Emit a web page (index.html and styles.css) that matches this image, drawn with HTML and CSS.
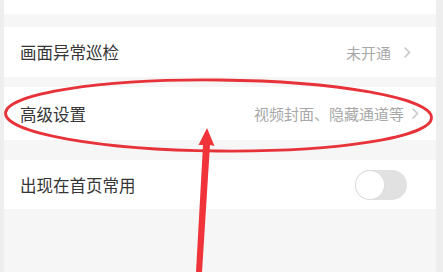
FILE: index.html
```html
<!DOCTYPE html>
<html lang="zh">
<head>
<meta charset="utf-8">
<link rel="stylesheet" href="styles.css">
</head>
<body>
<div class="page">
  <div class="card card-top"></div>
  <div class="card row row-1">
    <span class="title">画面异常巡检</span>
    <span class="value">未开通<span class="chev"><svg width="8" height="13" viewBox="0 0 8 13"><path d="M1.5 1.5 L6.5 6.5 L1.5 11.5" fill="none" stroke="#c8c8c8" stroke-width="1.6"/></svg></span></span>
  </div>
  <div class="card row row-2">
    <span class="title">高级设置</span>
    <span class="value">视频封面、隐藏通道等<span class="chev"><svg width="8" height="13" viewBox="0 0 8 13"><path d="M1.5 1.5 L6.5 6.5 L1.5 11.5" fill="none" stroke="#c8c8c8" stroke-width="1.6"/></svg></span></span>
  </div>
  <div class="card row row-3">
    <span class="title">出现在首页常用</span>
    <span class="toggle"><span class="knob"></span></span>
  </div>
  <svg class="mark" width="443" height="272" viewBox="0 0 443 272">
    <ellipse cx="218.5" cy="115.5" rx="213" ry="35.5" fill="none" stroke="#e8323a" stroke-width="2.8" transform="rotate(0.6 218.5 115.5)"/>
    <polygon points="196,272 202,272 210,145 214.5,146 207,128 198.5,145 203,145" fill="#f1343a"/>
  </svg>
</div>
</body>
</html>
```

FILE: styles.css
```css
html, body {
  margin: 0;
  padding: 0;
}
body {
  width: 443px;
  height: 272px;
  overflow: hidden;
  background: #eeeeee;
  font-family: "Noto Sans CJK SC", "Noto Sans", sans-serif;
}
.page {
  position: relative;
  width: 432px;
  height: 272px;
  margin-left: 4px;
  background: #f6f6f6;
  display: flex;
  flex-direction: column;
}
.card {
  background: #ffffff;
}
.card-top {
  height: 14px;
  margin-bottom: 13px;
}
.row {
  display: flex;
  align-items: center;
  justify-content: space-between;
  padding: 0 17px 0 16px;
}
.row-1 {
  height: 50px;
  margin-bottom: 10px;
  padding-right: 25px;
}
.row-2 {
  height: 53px;
  margin-bottom: 20px;
}
.row-3 {
  height: 49px;
  padding-right: 29px;
}
.title {
  font-size: 16.5px;
  color: #363636;
}
.value {
  display: flex;
  align-items: center;
  font-size: 15px;
  color: #a8a8a8;
}
.chev {
  display: flex;
  margin-left: 12px;
}
.row-2 .chev {
  margin-left: 7px;
}
.toggle {
  position: relative;
  width: 52px;
  height: 30px;
  border-radius: 15px;
  background: #e1e1e1;
}
.knob {
  position: absolute;
  left: 1px;
  top: 1px;
  width: 28px;
  height: 28px;
  border-radius: 50%;
  background: #ffffff;
  box-shadow: 0 0 0 1px #dcdcdc;
}
.mark {
  position: absolute;
  left: -4px;
  top: 0;
}
```
